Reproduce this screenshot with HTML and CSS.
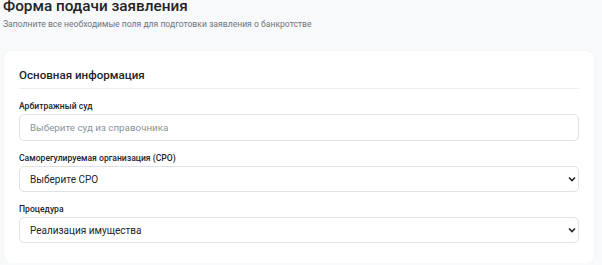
FILE: index.html
```html
<!DOCTYPE html>
<html lang="ru">
<head>
    <meta charset="UTF-8">
    <meta name="viewport" content="width=device-width, initial-scale=1.0">
    <title>Форма подачи заявления</title>
    <link rel="stylesheet" href="styles.css">
</head>
<body>
    <div class="page-header">
        <h1>Форма подачи заявления</h1>
        <p class="subtitle">Заполните все необходимые поля для подготовки заявления о банкротстве</p>
    </div>

    <div class="card">
        <h2 class="section-title">Основная информация</h2>

        <div class="field">
            <label for="court">Арбитражный суд</label>
            <input type="text" id="court" class="form-control" placeholder="Выберите суд из справочника">
        </div>

        <div class="field">
            <label for="sro">Саморегулируемая организация (СРО)</label>
            <select id="sro" class="form-select">
                <option>Выберите СРО</option>
            </select>
        </div>

        <div class="field">
            <label for="procedure">Процедура</label>
            <select id="procedure" class="form-select">
                <option>Реализация имущества</option>
                <option>Реструктуризация долгов</option>
            </select>
        </div>
    </div>
</body>
</html>
```

FILE: styles.css
```css
body {
    font-family: Roboto, "Noto Sans", sans-serif;
    margin: 0;
    padding: 0 8px 0 4px;
    background-color: #f8f9fb;
    color: #212529;
}
h1 {
    font-size: 15.3px;
    font-weight: 500;
    line-height: 20px;
    margin: -4px 0 0 -1px;
}
.subtitle {
    font-size: 8.6px;
    line-height: 12px;
    color: #6c757d;
    margin: 1.5px 0 0 -1px;
}
.card {
    background-color: #fff;
    border-radius: 8px;
    box-shadow: 0 0 3px rgba(0, 0, 0, 0.04);
    margin-top: 21.5px;
    padding: 16px 15px 20px 15px;
}
.section-title {
    font-size: 11.6px;
    font-weight: 500;
    line-height: 16px;
    margin: 0;
    padding-bottom: 5px;
    border-bottom: 1px solid #eceef1;
}
.field {
    margin-top: 11px;
}
.field label {
    display: block;
    font-size: 8.6px;
    font-weight: 500;
    line-height: 12px;
    margin-bottom: 2px;
}
.form-control, .form-select {
    display: block;
    width: 100%;
    box-sizing: border-box;
    height: 27px;
    padding: 0 10px;
    font-family: inherit;
    font-size: 10px;
    color: #212529;
    background-color: #fff;
    border: 1px solid #dee2e6;
    border-radius: 5px;
}
.form-control {
    font-size: 9.8px;
}
.form-control::placeholder {
    color: #8a9299;
}
.form-select {
    appearance: none;
    height: 26px;
    background-image: url("data:image/svg+xml,%3Csvg xmlns='http://www.w3.org/2000/svg' width='8' height='6' viewBox='0 0 8 6'%3E%3Cpath d='M1 1.5l3 3 3-3' fill='none' stroke='%23212529' stroke-width='1.6'/%3E%3C/svg%3E");
    background-repeat: no-repeat;
    background-position: right 2px center;
}
```
